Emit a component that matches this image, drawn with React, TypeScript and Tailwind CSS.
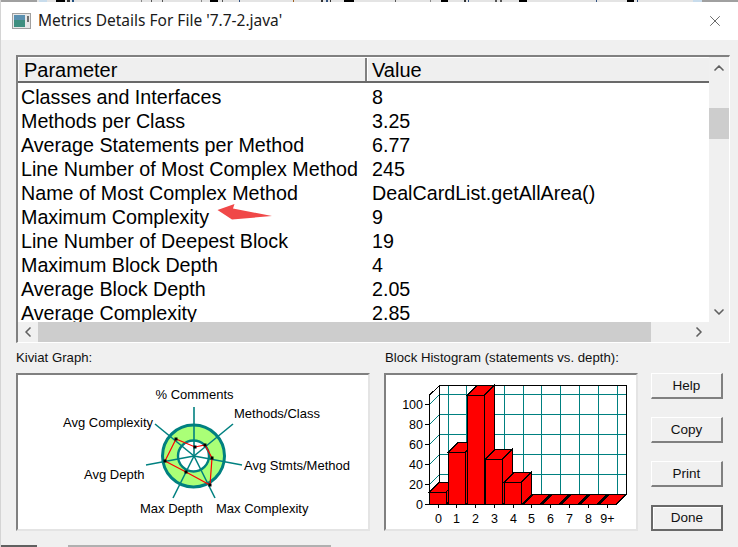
import { ChevronDown, ChevronLeft, ChevronRight, ChevronUp, X } from "lucide-react";

const rows = [
  ["Classes and Interfaces", "8"],
  ["Methods per Class", "3.25"],
  ["Average Statements per Method", "6.77"],
  ["Line Number of Most Complex Method", "245"],
  ["Name of Most Complex Method", "DealCardList.getAllArea()"],
  ["Maximum Complexity", "9"],
  ["Line Number of Deepest Block", "19"],
  ["Maximum Block Depth", "4"],
  ["Average Block Depth", "2.05"],
  ["Average Complexity", "2.85"],
];

const buttons = ["Help", "Copy", "Print", "Done"];

const TEAL = "#008080";

// bits of the window behind the dialog, showing along the top edge
const topBits = [
  [0, 36, "#a0a0a0"], [38, 8, "#c8dcec"], [55, 9, "#000"], [66, 3, "#333"], [71, 2, "#205080"],
  [140, 1, "#888"], [150, 1, "#555"], [161, 1, "#555"], [200, 1, "#888"], [209, 8, "#000"],
  [221, 1, "#555"], [238, 1, "#305080"], [292, 1, "#a06020"], [320, 2, "#333"], [325, 2, "#305080"],
  [329, 1, "#333"], [343, 10, "#000"], [394, 1, "#555"], [429, 1, "#888"], [440, 7, "#000"],
  [463, 2, "#333"], [467, 1, "#305080"], [494, 2, "#555"], [499, 2, "#555"], [518, 8, "#000"],
  [595, 1, "#305080"], [626, 7, "#000"], [636, 1, "#305080"], [692, 9, "#c8dcec"], [701, 37, "#a0a0a0"],
] as const;

const spokes = [
  [194, 407],
  [233, 424],
  [242, 465],
  [215, 498],
  [173, 498],
  [146, 465],
  [155, 424],
];

const marks = [
  [195, 447],
  [205, 445],
  [212, 458],
  [210, 485],
  [186, 472],
  [165, 461],
  [176, 439],
];

const kiviatLabels = [
  { text: "% Comments", x: 155.5, y: 399 },
  { text: "Methods/Class", x: 234, y: 418 },
  { text: "Avg Stmts/Method", x: 244, y: 470 },
  { text: "Max Complexity", x: 216, y: 513 },
  { text: "Max Depth", x: 140, y: 513 },
  { text: "Avg Depth", x: 84, y: 479 },
  { text: "Avg Complexity", x: 63, y: 427 },
];

function Kiviat() {
  return (
    <svg className="block w-full h-full" viewBox="18 375 350 154">
      <circle cx="193.5" cy="456" r="31" fill="#aaff77" stroke={TEAL} strokeWidth="3" />
      <circle cx="193.5" cy="456" r="15.5" fill="#fff" stroke={TEAL} strokeWidth="2.4" />
      {spokes.map(([x, y], i) => (
        <line key={i} x1="194" y1="456" x2={x} y2={y} stroke={TEAL} strokeWidth="1.6" />
      ))}
      <polygon
        points={marks.map((m) => m.join(",")).join(" ")}
        fill="none"
        stroke="#ff0000"
        strokeWidth="1.2"
      />
      {marks.map(([x, y], i) => (
        <rect key={i} x={x - 1.5} y={y - 1.5} width="3" height="3" fill="#000" />
      ))}
      {kiviatLabels.map((l) => (
        <text key={l.text} x={l.x} y={l.y} fontSize="13" fill="#000" fontFamily="Liberation Sans, sans-serif">
          {l.text}
        </text>
      ))}
    </svg>
  );
}

const bars = [
  { x: 429.5, w: 16.5, top: 492 },
  { x: 448.5, w: 17, top: 452 },
  { x: 467.5, w: 17, top: 395 },
  { x: 485.5, w: 17, top: 459 },
  { x: 504.5, w: 17, top: 482 },
];

const flats = [523, 542, 561, 580, 599];
const gridY = [394.5, 414.5, 434.5, 454.5, 474.5];
const gridX = [448.5, 466.5, 485.5, 504.5, 523.5, 541.5, 560.5, 579.5, 598.5, 617.5];
const yLabels = ["100", "80", "60", "40", "20", "0"];
const xLabels = ["0", "1", "2", "3", "4", "5", "6", "7", "8", "9+"];
const xTicks = [438.5, 456.5, 475.5, 494.5, 513.5, 531.5, 550.5, 569.5, 588.5, 607.5];

function Histogram() {
  return (
    <svg className="block w-full h-full" viewBox="386 375 250 154" shapeRendering="crispEdges">
      {gridY.map((y) => (
        <g key={y}>
          <line x1="439.5" y1={y} x2="626.5" y2={y} stroke={TEAL} />
          <line x1="429.5" y1={y + 10} x2="439.5" y2={y} stroke={TEAL} />
        </g>
      ))}
      {gridX.map((x) => (
        <line key={x} x1={x} y1="385.5" x2={x} y2="494.5" stroke={TEAL} />
      ))}
      <polyline
        points="429.5,504.5 429.5,395 439.5,385.5 626.5,385.5 626.5,494.5 616.5,504.5 429.5,504.5"
        fill="none"
        stroke="#000"
      />
      <line x1="439.5" y1="385.5" x2="439.5" y2="494.5" stroke="#000" />
      <line x1="439.5" y1="494.5" x2="626.5" y2="494.5" stroke="#000" />
      {bars.map((b) => (
        <g key={b.x} stroke="#000" fill="#ff0000">
          <polygon points={`${b.x},${b.top} ${b.x + 10},${b.top - 10} ${b.x + b.w + 10},${b.top - 10} ${b.x + b.w},${b.top}`} />
          <polygon points={`${b.x + b.w},${b.top} ${b.x + b.w + 10},${b.top - 10} ${b.x + b.w + 10},494.5 ${b.x + b.w},504.5`} />
          <rect x={b.x} y={b.top} width={b.w} height={504.5 - b.top} />
        </g>
      ))}
      {flats.map((x) => (
        <polygon key={x} points={`${x},504.5 ${x + 10},494.5 ${x + 27},494.5 ${x + 17},504.5`} fill="#ff0000" stroke="#000" />
      ))}
      {yLabels.map((t, i) => (
        <g key={t}>
          <line x1="425" y1={404.5 + i * 20} x2="429" y2={404.5 + i * 20} stroke="#000" />
          <text x="423" y={409 + i * 20} textAnchor="end" fontSize="12.5" fill="#000" fontFamily="Liberation Sans, sans-serif" shapeRendering="auto">
            {t}
          </text>
        </g>
      ))}
      {xLabels.map((t, i) => (
        <g key={t}>
          <line x1={xTicks[i]} y1="504.5" x2={xTicks[i]} y2="508" stroke="#000" />
          <text x={xTicks[i]} y="523" textAnchor="middle" fontSize="12.5" fill="#000" fontFamily="Liberation Sans, sans-serif">
            {t}
          </text>
        </g>
      ))}
    </svg>
  );
}

export default function App() {
  return (
    <div className="w-[738px] h-[547px] relative overflow-hidden bg-[#f0f0f0] font-['Liberation_Sans',sans-serif] text-black border-l border-l-[#d4d4d4]">
      <svg className="block" width="738" height="2" viewBox="0 0 738 2">
        <rect width="738" height="2" fill="#e4e4e4" />
        {topBits.map(([x, w, c]) => (
          <rect key={x} x={x} y="0" width={w} height="2" fill={c} />
        ))}
      </svg>

      {/* title bar */}
      <div className="h-[38px] bg-white flex items-center pl-[11px] pr-[14px]">
        <svg width="19" height="16" viewBox="0 0 19 16" className="shrink-0">
          <rect x="0.5" y="0.5" width="18" height="15" fill="#e8e8e8" stroke="#a0a0a0" />
          <rect x="2" y="2" width="11" height="12" fill="#3f8f80" />
          <rect x="2" y="2" width="11" height="5" fill="#5a90b0" />
          <rect x="15" y="3" width="2" height="6" fill="#707070" />
        </svg>
        <div className="ml-[7px] text-[15.5px] text-[#1a1a1a] font-['Noto_Sans',sans-serif]">
          Metrics Details For File '7.7-2.java'
        </div>
        <X className="ml-auto" size={18} strokeWidth={0.9} color="#222" />
      </div>

      <div className="pl-[15px] pt-[15px]">
        {/* list */}
        <div className="h-[288px] w-[714px] border-t-2 border-l-2 border-t-[#808080] border-l-[#808080] border-r border-b border-r-white border-b-white flex flex-col bg-[#f0f0f0]">
          <div className="flex flex-1 min-h-0">
            <div className="w-[691px] bg-white flex flex-col overflow-hidden">
              <div className="flex h-[26px] shrink-0 text-[20px] leading-[24px] bg-[#efefef] border-b-2 border-b-[#696969] border-t border-t-white">
                <div className="w-[349px] pl-[5px] border-r-2 border-r-[#808080] border-l border-l-white">Parameter</div>
                <div className="flex-1 pl-[4px] border-l border-l-white">Value</div>
              </div>
              {rows.map(([name, value]) => (
                <div key={name} className="flex h-[24px] shrink-0 text-[19.7px] leading-[28px]">
                  <div className="w-[350px] pl-[3px] whitespace-nowrap">{name}</div>
                  <div className="pl-[4px] whitespace-nowrap">{value}</div>
                </div>
              ))}
            </div>
            <div className="flex-1 flex flex-col items-center">
              <ChevronUp size={16} strokeWidth={2.5} color="#606060" className="mt-[1px] h-[20px]" />
              <div className="mt-[30px] w-full h-[31px] bg-[#cdcdcd]" />
              <ChevronDown size={16} strokeWidth={2.5} color="#606060" className="mt-auto mb-[2px]" />
            </div>
          </div>
          <div className="h-[20px] shrink-0 flex items-center">
            <div className="w-[20px] flex justify-center">
              <ChevronLeft size={16} strokeWidth={2.5} color="#606060" />
            </div>
            <div className="w-[613px] h-full bg-[#cdcdcd]" />
            <div className="ml-[38px] w-[20px] flex justify-center">
              <ChevronRight size={16} strokeWidth={2.5} color="#606060" />
            </div>
          </div>
        </div>

        {/* lower panels */}
        <div className="flex mt-[7px] text-[13.2px] leading-[16px] text-[#111]">
          <div className="w-[354px] shrink-0">
            <div className="h-[23px]">Kiviat Graph:</div>
            <div className="h-[158px] bg-white border-t-2 border-l-2 border-t-[#808080] border-l-[#808080] border-r-2 border-b-2 border-r-[#e4e4e4] border-b-[#e4e4e4]">
              <Kiviat />
            </div>
          </div>
          <div className="w-[254px] ml-[14px] shrink-0">
            <div className="h-[23px] pl-[1px]">Block Histogram (statements vs. depth):</div>
            <div className="h-[158px] bg-white border-t-2 border-l-2 border-t-[#808080] border-l-[#808080] border-r-2 border-b-2 border-r-[#e4e4e4] border-b-[#e4e4e4]">
              <Histogram />
            </div>
          </div>
          <div className="ml-[13px] pt-[23px] flex flex-col gap-[18px] shrink-0">
            {buttons.map((label) => (
              <button
                key={label}
                className={
                  label === "Done"
                    ? "w-[72px] h-[26px] bg-[#f0f0f0] text-[13.5px] border-2 border-[#696969] shadow-[inset_1px_1px_0_#fff]"
                    : "w-[72px] h-[26px] bg-[#f0f0f0] text-[13.5px] border-t border-l border-t-white border-l-white border-r-2 border-b-2 border-r-[#808080] border-b-[#808080]"
                }
              >
                {label}
              </button>
            ))}
          </div>
        </div>

        {/* window behind, bottom edge */}
        <div className="mt-[14px] -ml-[15px] h-[2px] flex">
          <div className="w-[36px] bg-[#606060]" />
          <div className="w-[31px]" />
          <div className="w-[263px] bg-[#b0b0b0]" />
        </div>
      </div>

      {/* annotation arrow drawn on top of the screenshot */}
      <svg className="absolute left-[209px] top-[200px]" width="70" height="24" viewBox="210 200 70 24">
        <polygon points="217.5,210 234.5,204 233,208.5 272,216 232,219.5" fill="#f04848" />
      </svg>
    </div>
  );
}
